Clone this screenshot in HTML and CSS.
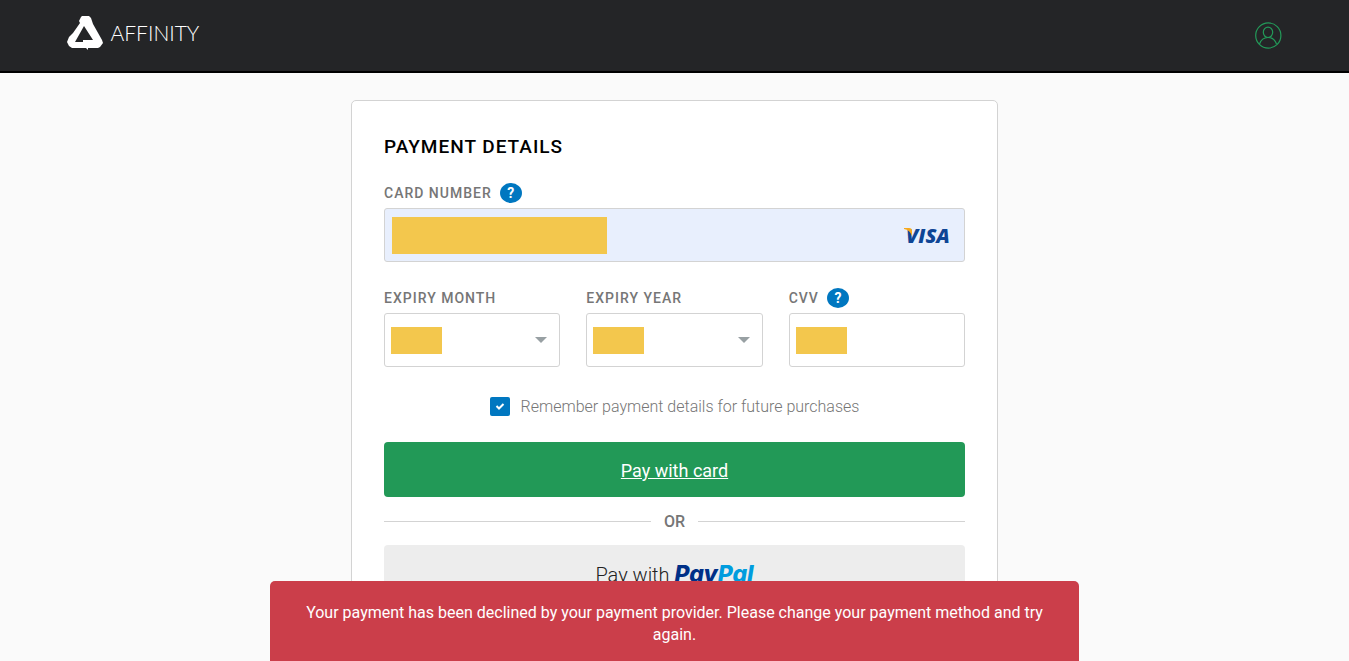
FILE: index.html
```html
<!DOCTYPE html>
<html lang="en">

<head>
    <meta charset="UTF-8">
    <meta name="viewport" content="width=device-width, initial-scale=1.0">
    <title>Affinity - Payment Details</title>
    <link rel="stylesheet" href="styles.css">
</head>

<body>
    <header class="site-header">
        <a href="#" class="logo">
            <svg class="logo-mark" width="38" height="36" viewBox="1 1 38 36" aria-hidden="true">
                <path fill="#fff" fill-rule="evenodd" d="M15 2 16 1H23L25 3 26 6 27 9 36 25 37 28 34 32 32 33H22L22 35 20 33H6L3 31 1 27 3 22 7 18 14 8 13 6ZM18 11 9 27H17V25H27Z"/>
            </svg>
            <span class="logo-text">AFFINITY</span>
        </a>
        <a href="#" class="account" aria-label="Account">
            <svg width="27" height="27" viewBox="0 0 27 27" fill="none" stroke="#239a59" stroke-width="1.2">
                <circle cx="13.3" cy="13.5" r="12.6"/>
                <ellipse cx="13" cy="10.3" rx="4.7" ry="5.2"/>
                <path d="M4.500 22C6 17.500 9 15.500 13 15.500S20 17.500 21.500 22"/>
            </svg>
        </a>
    </header>

    <main class="card">
        <form>
            <h1>Payment details</h1>

            <div class="form-group">
                <div class="label-row">
                    <label for="card-number">Card number</label>
                    <button type="button" class="help" aria-label="Card number help">?</button>
                </div>
                <div class="field">
                    <input type="text" id="card-number" class="autofilled">
                    <span class="mask mask-large"></span>
                    <svg class="visa" width="54" height="30" viewBox="0 0 54 30" role="img" aria-label="Visa">
                        <text x="2" y="23" class="visa-text">VISA</text>
                        <path fill="#f6a81c" d="M0 8H5Q8 8 8 11L8 16Q6 10 0 9Z"/>
                    </svg>
                </div>
            </div>

            <div class="form-row">
                <div class="form-group">
                    <div class="label-row">
                        <label for="expiry-month">Expiry month</label>
                    </div>
                    <div class="field select-field">
                        <select id="expiry-month"></select>
                        <span class="mask"></span>
                    </div>
                </div>
                <div class="form-group">
                    <div class="label-row">
                        <label for="expiry-year">Expiry year</label>
                    </div>
                    <div class="field select-field">
                        <select id="expiry-year"></select>
                        <span class="mask"></span>
                    </div>
                </div>
                <div class="form-group">
                    <div class="label-row">
                        <label for="cvv">CVV</label>
                        <button type="button" class="help" aria-label="CVV help">?</button>
                    </div>
                    <div class="field">
                        <input type="text" id="cvv">
                        <span class="mask"></span>
                    </div>
                </div>
            </div>

            <div class="remember">
                <input type="checkbox" id="remember" checked>
                <label for="remember">Remember payment details for future purchases</label>
            </div>

            <button type="submit" class="btn btn-card">Pay with card</button>
            <div class="divider">OR</div>
            <button type="button" class="btn btn-paypal">Pay with <span class="paypal">Pay<span class="pal">Pal</span></span></button>
        </form>
    </main>

    <div class="alert" role="alert">Your payment has been declined by your payment provider. Please change your payment method and try again.</div>
</body>

</html>
```

FILE: styles.css
```css
* {
    box-sizing: border-box;
    margin: 0;
    padding: 0;
}

body {
    font-family: Roboto, "Liberation Sans", sans-serif;
    font-size: 16px;
    background-color: #fafafa;
    color: #767676;
}

button,
input,
select {
    font-family: inherit;
}

.site-header {
    display: flex;
    justify-content: space-between;
    align-items: center;
    height: 73px;
    padding: 0 5%;
    background-color: #242527;
    border-bottom: 2px solid #000;
}

.logo {
    display: flex;
    align-items: center;
    gap: 5px;
    padding-bottom: 4px;
    text-decoration: none;
}

.logo-text {
    padding-bottom: 2px;
    font-family: Lato, sans-serif;
    font-size: 21px;
    font-weight: 300;
    color: #fff;
}

.account svg {
    display: block;
}

.card {
    max-width: 647px;
    margin: 27px auto 0;
    padding: 32px;
    background-color: #fff;
    border: 1px solid #d3d3d3;
    border-radius: 5px;
}

h1 {
    font-size: 19px;
    font-weight: 500;
    line-height: 28px;
    letter-spacing: 1px;
    text-transform: uppercase;
    color: #000;
    margin-bottom: 20px;
}

.form-group {
    margin-bottom: 24px;
}

.label-row {
    display: flex;
    align-items: center;
    gap: 8px;
    height: 24px;
    margin-bottom: 3px;
}

.label-row label {
    font-size: 14px;
    font-weight: 500;
    letter-spacing: 1px;
    text-transform: uppercase;
}

.help {
    width: 22px;
    height: 20px;
    background-color: #0077c0;
    color: #fff;
    border: none;
    border-radius: 50%;
    font-size: 14px;
    font-weight: 700;
    line-height: 20px;
    cursor: pointer;
}

.form-row {
    display: grid;
    grid-template-columns: repeat(3, 1fr);
    gap: 26px;
}

.field {
    position: relative;
}

.field input,
.field select {
    display: block;
    width: 100%;
    height: 54px;
    padding: 0 16px;
    font-size: 16px;
    background-color: #fff;
    border: 1px solid #d3d3d3;
    border-radius: 3px;
    appearance: none;
}

.field .autofilled {
    background-color: #e8effd;
}

/* dropdown arrow */
.select-field::after {
    content: "";
    position: absolute;
    top: 24px;
    right: 13px;
    border: 6px solid transparent;
    border-top-color: #98a0a3;
    border-bottom: none;
}

.mask {
    position: absolute;
    top: 14px;
    left: 7px;
    width: 51px;
    height: 27px;
    background-color: #f3c74d;
}

.mask-large {
    top: 9px;
    left: 8px;
    width: 215px;
    height: 37px;
}

.visa {
    position: absolute;
    top: 12px;
    right: 7px;
}

.visa-text {
    font-family: "Open Sans", sans-serif;
    font-size: 20px;
    font-weight: 800;
    font-style: italic;
    fill: #0e4595;
}

.remember {
    display: flex;
    justify-content: center;
    align-items: center;
    gap: 11px;
    height: 30px;
    margin-bottom: 21px;
}

.remember input {
    width: 20px;
    height: 19px;
    appearance: none;
    border-radius: 2px;
    background: #0077c0 url("data:image/svg+xml,%3Csvg xmlns='http://www.w3.org/2000/svg' viewBox='0 0 20 19'%3E%3Cpath d='M6.500 9l2.500 2.500 4.500-4.500' fill='none' stroke='%23fff' stroke-width='2'/%3E%3C/svg%3E") center no-repeat;
}

.remember label {
    font-size: 16px;
    font-weight: 300;
}

.btn {
    display: block;
    width: 100%;
    height: 55px;
    border: none;
    border-radius: 4px;
    font-size: 18px;
    cursor: pointer;
}

.btn-card {
    padding-top: 2px;
    background-color: #229957;
    color: #fff;
    text-decoration: underline;
}

.divider {
    display: flex;
    align-items: center;
    gap: 13px;
    height: 48px;
    font-size: 16px;
    font-weight: 500;
}

.divider::before,
.divider::after {
    content: "";
    flex: 1;
    height: 1px;
    background-color: #d3d3d3;
}

.btn-paypal {
    padding-top: 3px;
    background-color: #ededed;
    color: #222;
    font-size: 20px;
    font-weight: 300;
}

.paypal {
    font-family: Inter, sans-serif;
    font-size: 23px;
    font-weight: 800;
    font-style: italic;
    color: #003087;
}

.pal {
    color: #009cde;
}

.alert {
    position: fixed;
    bottom: 0;
    left: 20%;
    right: 20%;
    height: 80px;
    padding: 21px 24px;
    background-color: #cb3e4a;
    border-radius: 5px 5px 0 0;
    color: #fff;
    font-size: 16px;
    line-height: 22px;
    text-align: center;
}
```
